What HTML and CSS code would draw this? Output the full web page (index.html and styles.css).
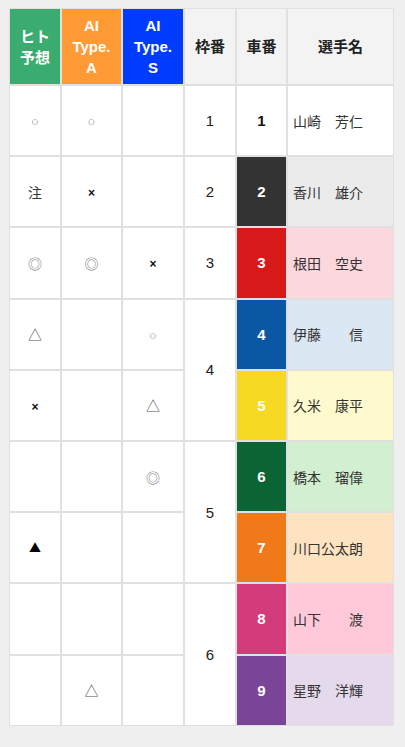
FILE: index.html
```html
<!DOCTYPE html>
<html lang="ja">
<head>
  <meta charset="UTF-8">
  <meta name="viewport" content="width=device-width, initial-scale=1.0">
  <title>出走表</title>
  <link rel="stylesheet" href="styles.css">
</head>
<body>
  <table class="entry-table">
    <colgroup>
      <col class="w-human">
      <col class="w-ai">
      <col class="w-ai2">
      <col class="w-waku">
      <col class="w-sha">
      <col class="w-name">
    </colgroup>
    <thead>
      <tr>
        <th class="h-human">ヒト<br>予想</th>
        <th class="h-ai-a">AI<br>Type.<br>A</th>
        <th class="h-ai-s">AI<br>Type.<br>S</th>
        <th>枠番</th>
        <th>車番</th>
        <th>選手名</th>
      </tr>
    </thead>
    <tbody>
      <tr>
        <td><span class="m-circle">○</span></td>
        <td><span class="m-circle">○</span></td>
        <td></td>
        <td class="waku">1</td>
        <td class="sha c1">1</td>
        <td class="name n1">山崎　芳仁</td>
      </tr>
      <tr>
        <td><span class="m-chu">注</span></td>
        <td><span class="m-x">×</span></td>
        <td></td>
        <td class="waku">2</td>
        <td class="sha c2">2</td>
        <td class="name n2">香川　雄介</td>
      </tr>
      <tr>
        <td><span class="m-double">◎</span></td>
        <td><span class="m-double">◎</span></td>
        <td><span class="m-x">×</span></td>
        <td class="waku">3</td>
        <td class="sha c3">3</td>
        <td class="name n3">根田　空史</td>
      </tr>
      <tr>
        <td><span class="m-tri">△</span></td>
        <td></td>
        <td><span class="m-circle">○</span></td>
        <td class="waku" rowspan="2">4</td>
        <td class="sha c4">4</td>
        <td class="name n4">伊藤　　信</td>
      </tr>
      <tr>
        <td><span class="m-x">×</span></td>
        <td></td>
        <td><span class="m-tri">△</span></td>
        <td class="sha c5">5</td>
        <td class="name n5">久米　康平</td>
      </tr>
      <tr>
        <td></td>
        <td></td>
        <td><span class="m-double">◎</span></td>
        <td class="waku" rowspan="2">5</td>
        <td class="sha c6">6</td>
        <td class="name n6">橋本　瑠偉</td>
      </tr>
      <tr>
        <td><span class="m-solid">▲</span></td>
        <td></td>
        <td></td>
        <td class="sha c7">7</td>
        <td class="name n7">川口公太朗</td>
      </tr>
      <tr>
        <td></td>
        <td></td>
        <td></td>
        <td class="waku" rowspan="2">6</td>
        <td class="sha c8">8</td>
        <td class="name n8">山下　　渡</td>
      </tr>
      <tr>
        <td></td>
        <td><span class="m-tri">△</span></td>
        <td></td>
        <td class="sha c9">9</td>
        <td class="name n9">星野　洋輝</td>
      </tr>
    </tbody>
  </table>
</body>
</html>
```

FILE: styles.css
```css
body {
  margin: 0;
  padding: 8px 9px;
  background-color: #efefef;
  font-family: "Liberation Sans", "Noto Sans CJK JP", sans-serif;
  font-size: 14px;
  color: #222;
}
.entry-table {
  width: 385px;
  table-layout: fixed;
  border-collapse: separate;
  border-spacing: 0;
  background-color: #fff;
}
.w-human { width: 52px; }
.w-ai { width: 61px; }
.w-ai2 { width: 62px; }
.w-waku { width: 52px; }
.w-sha { width: 51px; }
.w-name { width: 107px; }

th,
td {
  border: 1px solid #e0e0e0;
  padding: 0;
  text-align: center;
  vertical-align: middle;
}
th {
  height: 75px;
  background-color: #f3f3f3;
  font-size: 15px;
  font-weight: bold;
  line-height: 21px;
  color: #222;
}
td {
  height: 69.2px;
  font-size: 15px;
}
.h-human {
  background-color: #3aac6f;
  color: #fff;
}
.h-ai-a {
  background-color: #ff9a35;
  color: #fff;
}
.h-ai-s {
  background-color: #003cff;
  color: #fff;
}

/* marks */
.m-circle {
  font-size: 13px;
  color: #888;
}
.m-double {
  font-family: "Noto Sans CJK JP", sans-serif;
  font-size: 14px;
  color: #777;
}
.m-tri {
  font-family: "Noto Sans CJK JP", sans-serif;
  font-size: 14px;
  color: #555;
}
.m-solid {
  font-family: "Noto Sans CJK JP", sans-serif;
  font-size: 12px;
  color: #000;
}
.m-x {
  font-size: 12px;
  font-weight: bold;
  color: #111;
}
.m-chu {
  font-family: "Noto Sans CJK JP", sans-serif;
  font-size: 14px;
  color: #333;
}

.waku {
  color: #222;
}
.sha {
  font-weight: bold;
  color: #fff;
}
.name {
  text-align: left;
  padding-left: 5px;
  font-family: "Noto Sans CJK JP", sans-serif;
  font-size: 14px;
  color: #333;
  white-space: nowrap;
}

.c1 { background-color: #fff; color: #111; }
.c2 { background-color: #333333; }
.c3 { background-color: #d7191a; }
.c4 { background-color: #0a58a4; }
.c5 { background-color: #f5d922; }
.c6 { background-color: #0b6433; }
.c7 { background-color: #f07a19; }
.c8 { background-color: #d33c7a; }
.c9 { background-color: #7a4599; }

.n1 { background-color: #fff; }
.n2 { background-color: #ebebeb; }
.n3 { background-color: #fcd7de; }
.n4 { background-color: #dbe8f4; }
.n5 { background-color: #fffacd; }
.n6 { background-color: #d2efd0; }
.n7 { background-color: #fde3bf; }
.n8 { background-color: #ffc9da; }
.n9 { background-color: #e5daeb; }
```
